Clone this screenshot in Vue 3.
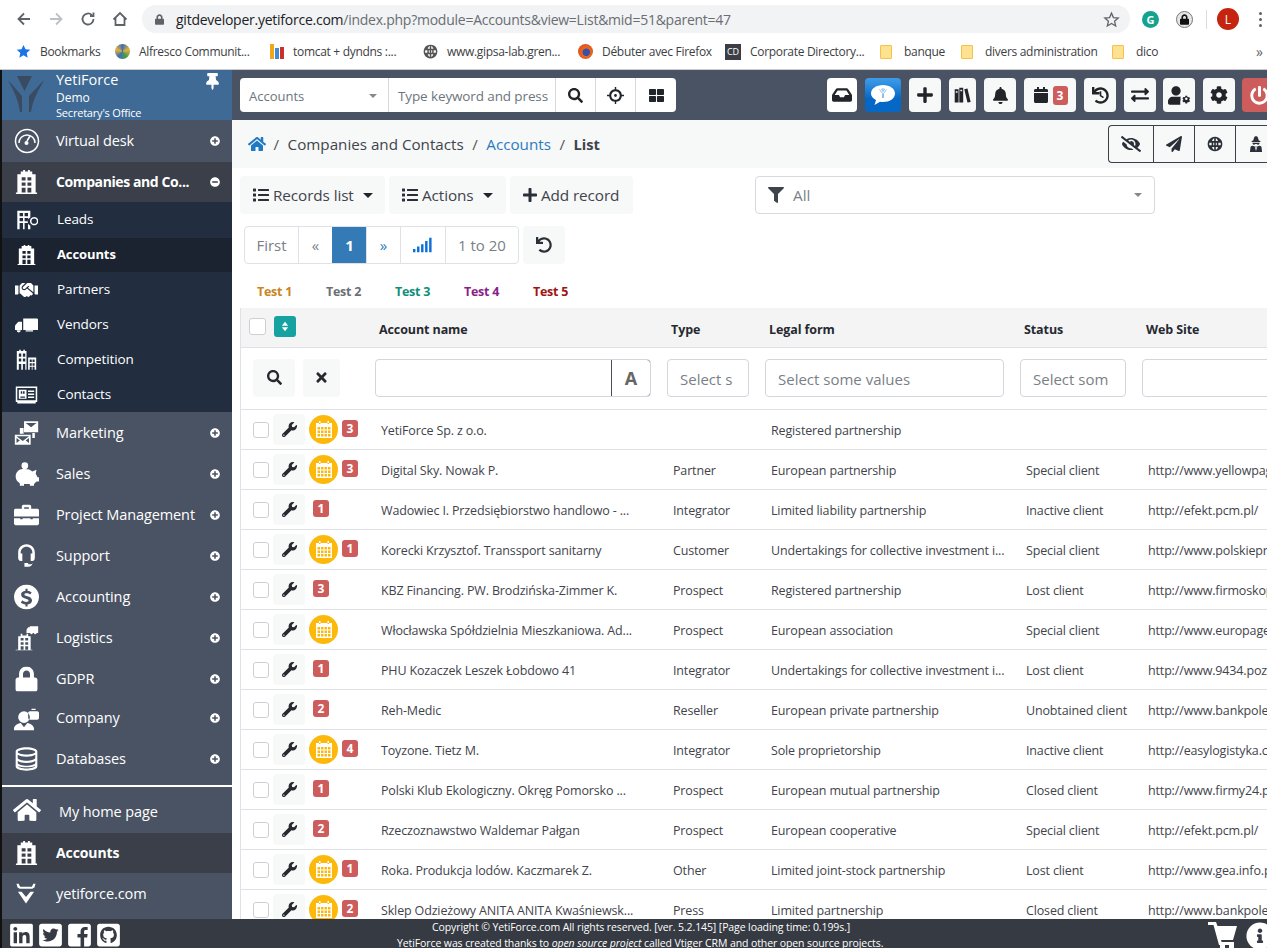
<script setup>
const I = {
  search: ['0 0 512 512','M505 442.7L405.3 343c-4.5-4.5-10.6-7-17-7H372c27.6-35.3 44-79.7 44-128C416 93.1 322.9 0 208 0S0 93.1 0 208s93.1 208 208 208c48.3 0 92.7-16.4 128-44v16.3c0 6.4 2.5 12.5 7 17l99.7 99.7c9.4 9.4 24.6 9.4 33.9 0l28.3-28.3c9.4-9.4 9.4-24.6.1-34zM208 336c-70.7 0-128-57.2-128-128 0-70.7 57.2-128 128-128 70.7 0 128 57.2 128 128 0 70.7-57.2 128-128 128z'],
  plus: ['0 0 448 512','M416 208H272V64c0-17.67-14.33-32-32-32h-32c-17.67 0-32 14.33-32 32v144H32c-17.67 0-32 14.33-32 32v32c0 17.67 14.33 32 32 32h144v144c0 17.67 14.33 32 32 32h32c17.67 0 32-14.33 32-32V304h144c17.67 0 32-14.33 32-32v-32c0-17.67-14.33-32-32-32z'],
  times: ['0 0 352 512','M242.72 256l100.07-100.07c12.28-12.28 12.28-32.19 0-44.48l-22.24-22.24c-12.28-12.28-32.19-12.28-44.48 0L176 189.28 75.93 89.21c-12.28-12.28-32.19-12.28-44.48 0L9.21 111.45c-12.28 12.28-12.28 32.19 0 44.48L109.28 256 9.21 356.07c-12.28 12.28-12.28 32.19 0 44.48l22.24 22.24c12.28 12.28 32.2 12.28 44.48 0L176 322.72l100.07 100.07c12.28 12.28 32.2 12.28 44.48 0l22.24-22.24c12.28-12.28 12.28-32.19 0-44.48L242.72 256z'],
  wrench: ['0 0 512 512','M507.73 109.1c-2.24-9.03-13.54-12.09-20.12-5.51l-74.36 74.36-67.88-11.31-11.31-67.88 74.36-74.36c6.62-6.62 3.43-17.9-5.66-20.16-47.38-11.74-99.55.91-136.58 37.93-39.64 39.64-50.55 97.1-34.05 147.2L18.74 402.76c-24.99 24.99-24.99 65.51 0 90.5 24.99 24.99 65.51 24.99 90.5 0l213.21-213.21c50.12 16.71 107.47 5.68 147.37-34.22 37.07-37.07 49.7-89.32 37.91-136.73zM64 472c-13.25 0-24-10.75-24-24 0-13.26 10.75-24 24-24s24 10.74 24 24c0 13.25-10.75 24-24 24z'],
  bell: ['0 0 448 512','M224 512c35.32 0 63.97-28.65 63.97-64H160.03c0 35.35 28.65 64 63.97 64zm215.39-149.71c-19.32-20.76-55.47-51.99-55.47-154.29 0-77.7-54.48-139.9-127.94-155.16V32c0-17.67-14.32-32-31.98-32s-31.98 14.33-31.98 32v20.84C118.56 68.1 64.08 130.3 64.08 208c0 102.3-36.15 133.53-55.47 154.29-6 6.45-8.66 14.16-8.61 21.71.11 16.4 12.98 32 32.1 32h383.8c19.12 0 32-15.6 32.1-32 .05-7.55-2.61-15.27-8.61-21.71z'],
  home: ['0 0 576 512','M280.37 148.26L96 300.11V464a16 16 0 0 0 16 16l112.06-.29a16 16 0 0 0 15.92-16V368a16 16 0 0 1 16-16h64a16 16 0 0 1 16 16v95.64a16 16 0 0 0 16 16.05L464 480a16 16 0 0 0 16-16V300L295.67 148.26a12.19 12.19 0 0 0-15.3 0zM571.6 251.47L488 182.56V44.05a12 12 0 0 0-12-12h-56a12 12 0 0 0-12 12v72.61L318.47 43a48 48 0 0 0-61 0L4.34 251.47a12 12 0 0 0-1.6 16.9l25.5 31A12 12 0 0 0 45.15 301l235.22-193.74a12.19 12.19 0 0 1 15.3 0L530.9 301a12 12 0 0 0 16.9-1.6l25.5-31a12 12 0 0 0-1.7-16.93z'],
  list: ['0 0 512 512','M80 368H16a16 16 0 0 0-16 16v64a16 16 0 0 0 16 16h64a16 16 0 0 0 16-16v-64a16 16 0 0 0-16-16zm0-320H16A16 16 0 0 0 0 64v64a16 16 0 0 0 16 16h64a16 16 0 0 0 16-16V64a16 16 0 0 0-16-16zm0 160H16a16 16 0 0 0-16 16v64a16 16 0 0 0 16 16h64a16 16 0 0 0 16-16v-64a16 16 0 0 0-16-16zm416 176H176a16 16 0 0 0-16 16v32a16 16 0 0 0 16 16h320a16 16 0 0 0 16-16v-32a16 16 0 0 0-16-16zm0-320H176a16 16 0 0 0-16 16v32a16 16 0 0 0 16 16h320a16 16 0 0 0 16-16V80a16 16 0 0 0-16-16zm0 160H176a16 16 0 0 0-16 16v32a16 16 0 0 0 16 16h320a16 16 0 0 0 16-16v-32a16 16 0 0 0-16-16z'],
  filter: ['0 0 512 512','M487.976 0H24.028C2.71 0-8.047 25.866 7.058 40.971L192 225.941V432c0 7.831 3.821 15.17 10.237 19.662l80 55.98C298.02 518.69 320 507.493 320 487.98V225.941l184.947-184.97C520.021 25.896 509.338 0 487.976 0z'],
  cog: ['0 0 512 512','M487.4 315.7l-42.6-24.6c4.3-23.2 4.3-47 0-70.2l42.6-24.6c4.9-2.8 7.1-8.6 5.5-14-11.1-35.6-30-67.8-54.7-94.6-3.8-4.1-10-5.1-14.8-2.3L380.8 110c-17.9-15.4-38.5-27.3-60.8-35.1V25.8c0-5.6-3.9-10.5-9.4-11.7-36.7-8.2-74.3-7.8-109.2 0-5.5 1.2-9.4 6.1-9.4 11.7V75c-22.2 7.9-42.8 19.8-60.8 35.1L88.7 85.5c-4.9-2.8-11-1.9-14.8 2.3-24.7 26.7-43.6 58.9-54.7 94.6-1.7 5.4.6 11.2 5.5 14L67.3 221c-4.3 23.2-4.3 47 0 70.2l-42.6 24.6c-4.9 2.8-7.1 8.6-5.5 14 11.1 35.6 30 67.8 54.7 94.6 3.8 4.1 10 5.1 14.8 2.3l42.6-24.6c17.9 15.4 38.5 27.3 60.8 35.1v49.2c0 5.6 3.9 10.5 9.4 11.7 36.7 8.2 74.3 7.8 109.2 0 5.5-1.2 9.4-6.1 9.4-11.7v-49.2c22.2-7.9 42.8-19.8 60.8-35.1l42.6 24.6c4.9 2.8 11 1.9 14.8-2.3 24.7-26.7 43.6-58.9 54.7-94.6 1.5-5.5-.7-11.3-5.6-14.1zM256 336c-44.1 0-80-35.9-80-80s35.9-80 80-80 80 35.9 80 80-35.9 80-80 80z'],
  plane: ['0 0 512 512','M476 3.2L12.5 270.6c-18.1 10.4-15.8 35.6 2.2 43.2L121 358.4l287.3-253.2c5.5-4.9 13.3 2.6 8.6 8.3L176 407v80.5c0 23.6 28.5 32.9 42.5 15.8L282 426l124.6 52.2c14.2 6 30.4-2.9 33-18.2l72-432C515 7.8 493.3-6.8 476 3.2z'],
  power: ['0 0 512 512','M400 54.1c63 45 104 118.6 104 201.9 0 136.8-110.8 247.7-247.5 248C120 504.3 8.2 393 8 256.4 7.9 173.1 48.9 99.3 111.8 54.2c11.7-8.3 28-4.8 35 7.7L162.6 90c5.9 10.5 3.1 23.8-6.6 31-41.5 30.8-68 79.6-68 134.9-.1 92.3 74.5 168.1 168 168.1 91.6 0 168.6-74.2 168-169.1-.3-51.8-24.7-101.8-68.1-134-9.7-7.2-12.4-20.5-6.5-30.9l15.8-28.1c7-12.4 23.2-16.1 34.8-7.8zM296 264V24c0-13.3-10.7-24-24-24h-32c-13.3 0-24 10.7-24 24v240c0 13.3 10.7 24 24 24h32c13.3 0 24-10.7 24-24z'],
  undo: ['0 0 512 512','M212.333 224.333H12c-6.627 0-12-5.373-12-12V12C0 5.373 5.373 0 12 0h48c6.627 0 12 5.373 12 12v78.112C117.773 39.279 184.26 7.47 258.175 8.007c136.906.994 246.448 111.623 246.157 248.532C504.041 393.258 393.12 504 256.333 504c-64.089 0-122.496-24.313-166.51-64.215-5.099-4.622-5.334-12.554-.467-17.42l33.967-33.967c4.474-4.474 11.662-4.717 16.401-.525C170.76 415.336 211.58 432 256.333 432c97.268 0 176-78.716 176-176 0-97.267-78.716-176-176-176-58.496 0-110.28 28.476-142.274 72.333h98.274c6.627 0 12 5.373 12 12v48c0 6.627-5.373 12-12 12z'],
  history: ['0 0 512 512','M212.333 224.333H12c-6.627 0-12-5.373-12-12V12C0 5.373 5.373 0 12 0h48c6.627 0 12 5.373 12 12v78.112C117.773 39.279 184.26 7.47 258.175 8.007c136.906.994 246.448 111.623 246.157 248.532C504.041 393.258 393.12 504 256.333 504c-64.089 0-122.496-24.313-166.51-64.215-5.099-4.622-5.334-12.554-.467-17.42l33.967-33.967c4.474-4.474 11.662-4.717 16.401-.525C170.76 415.336 211.58 432 256.333 432c97.268 0 176-78.716 176-176 0-97.267-78.716-176-176-176-58.496 0-110.28 28.476-142.274 72.333h98.274c6.627 0 12 5.373 12 12v48c0 6.627-5.373 12-12 12zM232 130h48v116l80 58-28 38-100-74z'],
  exchange: ['0 0 512 512','M0 168v-16c0-13.255 10.745-24 24-24h360V80c0-21.367 25.899-32.042 40.971-16.971l80 80c9.372 9.373 9.372 24.569 0 33.941l-80 80C409.956 271.982 384 261.456 384 240v-48H24c-13.255 0-24-10.745-24-24zm488 152H128v-48c0-21.314-25.862-32.08-40.971-16.971l-80 80c-9.372 9.373-9.372 24.569 0 33.941l80 80C102.057 463.997 128 453.437 128 432v-48h360c13.255 0 24-10.745 24-24v-16c0-13.255-10.745-24-24-24z'],
  calendar: ['0 0 448 512','M12 192h424c6.6 0 12 5.4 12 12v260c0 26.5-21.5 48-48 48H48c-26.5 0-48-21.5-48-48V204c0-6.6 5.4-12 12-12zm436-44v-36c0-26.5-21.5-48-48-48h-48V12c0-6.6-5.4-12-12-12h-40c-6.6 0-12 5.4-12 12v52H160V12c0-6.6-5.4-12-12-12h-40c-6.6 0-12 5.4-12 12v52H48C21.5 64 0 85.5 0 112v36c0 6.6 5.4 12 12 12h424c6.6 0 12-5.4 12-12z'],
  inbox: ['0 0 576 512','M567.938 243.908L462.25 85.374A48.003 48.003 0 0 0 422.311 64H153.689a48 48 0 0 0-39.938 21.374L8.062 243.908A47.994 47.994 0 0 0 0 270.533V400c0 26.51 21.49 48 48 48h480c26.51 0 48-21.49 48-48V270.533a47.994 47.994 0 0 0-8.062-26.625zM162.252 128h251.497l85.333 128H376l-32 64H232l-32-64H76.918l85.334-128z'],
  th: ['0 0 512 512','M296 32h192c13.255 0 24 10.745 24 24v160c0 13.255-10.745 24-24 24H296c-13.255 0-24-10.745-24-24V56c0-13.255 10.745-24 24-24zm-80 0H24C10.745 32 0 42.745 0 56v160c0 13.255 10.745 24 24 24h192c13.255 0 24-10.745 24-24V56c0-13.255-10.745-24-24-24zM0 296v160c0 13.255 10.745 24 24 24h192c13.255 0 24-10.745 24-24V296c0-13.255-10.745-24-24-24H24c-13.255 0-24 10.745-24 24zm296 184h192c13.255 0 24-10.745 24-24V296c0-13.255-10.745-24-24-24H296c-13.255 0-24 10.745-24 24v160c0 13.255 10.745 24 24 24z'],
  pin: ['0 0 384 512','M298.028 214.267L285.793 96H328c13.255 0 24-10.745 24-24V24c0-13.255-10.745-24-24-24H56C42.745 0 32 10.745 32 24v48c0 13.255 10.745 24 24 24h42.207L85.972 214.267C37.465 236.82 0 277.261 0 328c0 13.255 10.745 24 24 24h136v104.007c0 1.242.289 2.467.845 3.578l24 48c2.941 5.882 11.364 5.893 14.311 0l24-48a8.008 8.008 0 0 0 .845-3.578V352h136c13.255 0 24-10.745 24-24-.001-51.183-37.983-91.42-85.973-113.733z'],
  pluscircle: ['0 0 512 512','M256 8C119 8 8 119 8 256s111 248 248 248 248-111 248-248S393 8 256 8zm144 276c0 6.6-5.4 12-12 12h-92v92c0 6.6-5.4 12-12 12h-56c-6.6 0-12-5.4-12-12v-92h-92c-6.6 0-12-5.4-12-12v-56c0-6.6 5.4-12 12-12h92v-92c0-6.6 5.4-12 12-12h56c6.6 0 12 5.4 12 12v92h92c6.6 0 12 5.4 12 12v56z'],
  minuscircle: ['0 0 512 512','M256 8C119 8 8 119 8 256s111 248 248 248 248-111 248-248S393 8 256 8zM124 296c-6.6 0-12-5.4-12-12v-56c0-6.6 5.4-12 12-12h264c6.6 0 12 5.4 12 12v56c0 6.6-5.4 12-12 12H124z'],
  lock: ['0 0 448 512','M400 224h-24v-72C376 68.2 307.8 0 224 0S72 68.2 72 152v72H48c-26.5 0-48 21.5-48 48v192c0 26.5 21.5 48 48 48h352c26.5 0 48-21.5 48-48V272c0-26.5-21.5-48-48-48zm-104 0H152v-72c0-39.7 32.3-72 72-72s72 32.3 72 72v72z'],
  database: ['0 0 28 30','M14 1c7 0 13 2 13 5v18c0 3-6 5-13 5S1 27 1 24V6c0-3 6-5 13-5zm0 2.500C8 3.500 3.500 5 3.500 6.500S8 9.500 14 9.500s10.500-1.500 10.500-3S20 3.500 14 3.500zM3.500 10v4c1 1.500 5 3 10.500 3s9.500-1.500 10.500-3v-4c-2 1.500-6 2.200-10.500 2.200S5.500 11.500 3.500 10zm0 7.500v2.500c1 1.500 5 3 10.500 3s9.500-1.500 10.500-3v-2.500c-2 1.500-6 2.200-10.500 2.200s-8.500-.7-10.500-2.200zm0 6c.5 1.500 5 3 10.500 3s10-1.500 10.500-3c-2 1-6 1.500-10.500 1.500S5.500 24.500 3.500 23.500z'],
  info: ['0 0 512 512','M256 8C119.043 8 8 119.083 8 256c0 136.997 111.043 248 248 248s248-111.003 248-248C504 119.083 392.957 8 256 8zm0 110c23.196 0 42 18.804 42 42s-18.804 42-42 42-42-18.804-42-42 18.804-42 42-42zm56 254c0 6.627-5.373 12-12 12h-88c-6.627 0-12-5.373-12-12v-24c0-6.627 5.373-12 12-12h12v-64h-12c-6.627 0-12-5.373-12-12v-24c0-6.627 5.373-12 12-12h64c6.627 0 12 5.373 12 12v100h12c6.627 0 12 5.373 12 12v24z'],
  linkedin: ['0 0 448 512','M416 32H31.9C14.3 32 0 46.5 0 64.3v383.4C0 465.5 14.3 480 31.9 480H416c17.6 0 32-14.5 32-32.3V64.3c0-17.8-14.4-32.3-32-32.3zM135.4 416H69V202.2h66.5V416zm-33.2-243c-21.3 0-38.5-17.3-38.5-38.5S80.9 96 102.2 96c21.2 0 38.5 17.3 38.5 38.5 0 21.3-17.2 38.5-38.5 38.5zm282.1 243h-66.4V312c0-24.8-.5-56.7-34.5-56.7-34.6 0-39.9 27-39.9 54.9V416h-66.4V202.2h63.7v29.2h.9c8.9-16.8 30.6-34.5 62.9-34.5 67.2 0 79.7 44.3 79.7 101.9V416z'],
  twitter: ['0 0 448 512','M400 32H48C21.5 32 0 53.5 0 80v352c0 26.5 21.5 48 48 48h352c26.5 0 48-21.5 48-48V80c0-26.5-21.5-48-48-48zm-48.9 158.8c.2 2.8.2 5.7.2 8.5 0 86.7-66 186.6-186.6 186.6-37.2 0-71.7-10.8-100.7-29.4 5.3.6 10.4.8 15.8.8 30.7 0 58.9-10.4 81.4-28-28.8-.6-53-19.5-61.3-45.5 10.1 1.5 19.2 1.5 29.6-1.2-30-6.1-52.5-32.5-52.5-64.4v-.8c8.7 4.9 18.9 7.9 29.6 8.3a65.447 65.447 0 0 1-29.2-54.6c0-12.2 3.2-23.4 8.9-33.1 32.3 39.8 80.8 65.8 135.2 68.6-9.3-44.5 24-80.6 64-80.6 18.9 0 35.9 7.9 47.9 20.7 14.8-2.8 29-8.3 41.6-15.8-4.9 15.2-15.1 28-28.6 36 13.1-1.4 25.8-5 37.6-10.1-8.9 13.1-20.1 24.7-32.9 34z'],
  facebook: ['0 0 448 512','M448 80v352c0 26.5-21.5 48-48 48h-85.3V302.8h60.6l8.7-67.6h-69.3V192c0-19.6 5.4-32.9 33.5-32.9H384V98.7c-6.2-.8-27.4-2.7-52.2-2.7-51.6 0-87 31.5-87 89.4v49.9H184v67.6h60.9V480H48c-26.5 0-48-21.5-48-48V80c0-26.5 21.5-48 48-48h352c26.5 0 48 21.5 48 48z'],
  github: ['0 0 448 512','M400 32H48C21.5 32 0 53.5 0 80v352c0 26.5 21.5 48 48 48h352c26.5 0 48-21.5 48-48V80c0-26.5-21.5-48-48-48zM277.3 415.7c-8.4 1.5-11.5-3.7-11.5-8 0-5.4.2-33 .2-55.3 0-15.6-5.2-25.5-11.3-30.7 37-4.1 76-9.2 76-73.1 0-18.2-6.5-27.3-17.1-39 1.7-4.3 7.4-22-1.7-45-13.9-4.3-45.7 17.9-45.7 17.9-13.2-3.7-27.5-5.6-41.6-5.6-14.1 0-28.4 1.9-41.6 5.6 0 0-31.8-22.2-45.7-17.9-9.1 22.9-3.5 40.6-1.7 45-10.6 11.7-15.6 20.8-15.6 39 0 63.6 37.3 69 74.3 73.1-4.8 4.3-9.1 11.7-10.6 22.3-9.5 4.3-33.8 11.7-48.3-13.9-9.1-15.8-25.5-17.1-25.5-17.1-16.2-.2-1.1 10.2-1.1 10.2 10.8 5 18.4 24.2 18.4 24.2 9.7 29.7 56.1 19.7 56.1 19.7 0 13.9.2 36.5.2 40.6 0 4.3-3 9.5-11.5 8-66-22.1-112.2-84.9-112.2-158.3 0-91.8 70.2-161.5 162-161.5S388 165.6 388 257.4c.1 73.4-44.7 136.3-110.7 158.3z'],
  star: ['0 0 24 24','M12 1.5l3.2 7 7.6.8-5.7 5.1 1.6 7.5L12 18.1l-6.7 3.8 1.6-7.5L1.2 9.3l7.6-.8z'],
  eyeslash: ['0 0 640 512','M320 400c-75.85 0-137.25-58.71-142.9-133.11L72.2 185.82c-13.79 17.3-26.48 35.59-36.72 55.59a32.35 32.35 0 0 0 0 29.19C89.71 376.41 197.07 448 320 448c26.91 0 52.87-4 77.89-10.46L346 397.39a144.13 144.13 0 0 1-26 2.61zm313.82 58.1l-110.55-85.44a331.25 331.25 0 0 0 81.25-102.07 32.35 32.35 0 0 0 0-29.19C550.29 135.59 442.93 64 320 64a308.15 308.15 0 0 0-147.32 37.7L45.46 3.37A16 16 0 0 0 23 6.18L3.37 31.45A16 16 0 0 0 6.18 53.9l588.36 454.73a16 16 0 0 0 22.46-2.81l19.64-25.27a16 16 0 0 0-2.82-22.45zm-183.72-142l-39.3-30.38A94.75 94.75 0 0 0 416 256a94.76 94.76 0 0 0-121.31-92.21A47.65 47.65 0 0 1 304 192a46.64 46.64 0 0 1-1.54 10l-73.61-56.89A142.31 142.31 0 0 1 320 112a143.92 143.92 0 0 1 144 144c0 21.63-5.29 41.79-13.9 60.11z'],
  usercog: ['0 0 640 512','M224 256c70.7 0 128-57.3 128-128S294.7 0 224 0 96 57.3 96 128s57.3 128 128 128zM134 288h224c-14 30-14 64 0 94-6 4-11 8-16 13v117H48c-26 0-48-21-48-48v-42c0-76 60-134 134-134zM610 398l-19-11c2-10 2-21 0-31l19-11c2-1 3-4 2-6-5-16-13-30-24-42-2-2-4-2-6-1l-19 11c-8-7-17-12-27-16v-22c0-2-2-5-4-5-16-4-33-4-48 0-3 0-4 3-4 5v22c-10 4-19 9-27 16l-19-11c-2-1-5-1-7 1-11 12-19 26-24 42-1 2 0 5 2 6l19 11c-2 10-2 21 0 31l-19 11c-2 1-3 4-2 6 5 16 13 30 24 42 2 2 5 2 7 1l19-11c8 7 17 12 27 16v22c0 2 1 5 4 5 16 4 32 4 48 0 2 0 4-3 4-5v-22c10-4 19-9 27-16l19 11c2 1 4 1 6-1 11-12 19-26 24-42 1-2 0-5-2-6zm-101-16a35 35 0 1 1 0-70 35 35 0 0 1 0 70z'],
  building: ['0 0 24 26','M2.500 24V5H6V2h2.500V.5h2V2h3V.5h2V2H18v3h3.500v19H23v1.500H1V24zM7 8v3.500h4V8zm6 0v3.500h4V8zM7 13.500V17h4v-3.500zm6 0V17h4v-3.500zM7 19v5h4v-5zm6 0v5h4v-5z'],
  leads: ['0 0 30 26','M3 25V1h17v8.500a6 6 0 0 0 0 11V25zM6 4v4h4.500V4zm6.500 0v4H17V4zM6 10.500v4h4.500v-4zm6.500 0v4H17v-4zM6 17v8h4.500v-8zm6.500 0v8H17v-8zM25 9a5.500 5.500 0 1 0 .01 0zM25 11a3.500 3.500 0 1 1-.01 7 3.500 3.500 0 0 1 .01-7z'],
  comp: ['0 0 28 26','M2 25V2h3V0h2v2h3V0h2v2h2v23zM4.500 5v4h3V5zm5 0v4h3V5zM4.500 11v4h3v-4zm5 0v4h3v-4zM4.500 18v7h3v-7zm5 0v7h3v-7zM16 25V10h10v15zM18 12.500v3h2.500v-3zm3.500 0v3H24v-3zM18 17v3h2.500v-3zm3.500 0v3H24v-3zM18 21.500V25h2.500v-3.500zm3.500 0V25H24v-3.500z'],
  shake: ['0 0 640 512','M434.700 64h-85.900c-8 0-15.700 3-21.600 8.400l-98.300 90c-.1.100-.2.300-.3.400-16.600 15.600-16.300 40.500-2.100 56 12.700 13.900 39.400 17.600 56.100 2.700.1-.1.300-.1.400-.2l79.900-73.200c6.500-5.900 16.700-5.500 22.600 1 6 6.500 5.500 16.600-1 22.600l-26.100 23.900L504 313.800c2.900 2.400 5.500 5 7.900 7.700V128l-54.600-54.600c-5.900-6-14.100-9.400-22.600-9.400zM544 128.200v223.900c0 17.700 14.300 32 32 32h64V128.200h-96zM0 384h64c17.700 0 32-14.300 32-32V128.200H0V384zm483.900-45.300L334.600 217.500l-30 27.500c-29.700 27.100-75.200 24.500-101.700-4.400-26.900-29.400-24.800-74.900 4.400-101.700L289.100 64h-83.800c-8.500 0-16.600 3.400-22.600 9.400L128 128v223.900h18.300l90.500 81.900c27.400 22.300 67.700 18.100 90-9.300l.2-.2 17.900 15.500c15.900 13 39.400 10.500 52.300-5.400l31.400-38.600 5.400 4.400c13.700 11.100 33.900 9.100 45-4.700l9.500-11.700c11.200-13.800 9.100-33.900-4.600-45.100z'],
  truck: ['0 0 28 20','M10 2h16.500a1.500 1.500 0 0 1 1.500 1.500V16H10zM8.500 6v10H0v-4.500c0-1 .500-1.500 1-2L4 6zM2 16.500a2.500 2.500 0 0 0 5 0zM13 16.500h9v1.500h-9z'],
  contacts: ['0 0 30 24','M1 1h28v20h-2v2H3v-2H1zM3 3v16h24V3zM5 5h10v12H5zM7.500 7v3.500h2V7zm3 0v3.500h2V7zM7 14v1.500h6V14zM17 6h8v2h-8zm0 4h8v2h-8zm0 4h8v2h-8z'],
  mail: ['0 0 30 30','M12 1h17v13H12zM14 3l6.500 5L27 3zM7 9h4.500v7H7zM22 15h3v6h-3zM1 17h19v12H1zM3 19l7.500 5.500L18 19zM3 21v6l4-3zm15 0v6l-4-3z'],
  piggy: ['0 0 30 28','M13 0a4 4 0 1 1 0 8 4 4 0 0 1 0-8zM5 10c2-2 5-2 8-2 4 0 7 1 9 3l5-2-1 5c1 1 2 3 2 4h2v5h-3c-1 1-2 2-3 3v2h-5v-2h-7v2H7v-3c-3-2-5-4-5-8 0-3 1-5 3-7z'],
  brief: ['0 0 32 26','M10 5V2c0-1 1-2 2-2h8c1 0 2 1 2 2v3h8c1 0 2 1 2 2v8H0V7c0-1 1-2 2-2zm3 0h6V3h-6zM0 17h8v1.500h3V17h10v1.500h3V17h8v7c0 1-1 2-2 2H2c-1 0-2-1-2-2z'],
  headset: ['0 0 24 30','M12 1C5.800 1 2 5.500 2 11v6c0 2 1 4 3 4h2V12H5v-1c0-4 3-7 7-7s7 3 7 7v1h-2v9h2v2c0 1-1 2-2 2h-3v-1.500H9.500V28H14c3 0 5-2 5-4v-3c2 0 3-2 3-4v-6c0-5.500-3.800-10-10-10z'],
  dollar: ['0 0 24 24','M12 0a12 12 0 1 0 .01 0zm-1 4v2c-2.500.3-4.200 1.600-4.200 3.700 0 2.400 1.700 3.300 4.500 4 2 .5 2.700.9 2.700 1.700 0 .7-.8 1.300-2.200 1.300-1.500 0-2.700-.6-3.700-1.500l-1.600 2c1.100 1 2.700 1.800 4.500 2v2h2v-2c2.600-.3 4.300-1.600 4.300-3.800 0-2.400-1.800-3.400-4.600-4.100-2-.5-2.700-.8-2.700-1.600 0-.7.700-1.200 2-1.200 1.500 0 2.500.4 3.500 1.200l1.500-2c-1-.9-2.500-1.500-4-1.700V4z'],
  logistics: ['0 0 30 30','M5 29V13h3v-3h2v2h5v-2h2v3h3v16h2v1H2v-1zM8 15v3h3.500v-3zm5.500 0v3H17v-3zM8 20v3h3.500v-3zm5.500 0v3H17v-3zM8 25v4h3.500v-4zm5.500 0v4H17v-4zM19 1h10v8h-2a1.500 1.500 0 0 1-3 0h-1.500a1.500 1.500 0 0 1-3 0H15V5l2-3h2z'],
  company: ['0 0 30 30','M12 7a7 7 0 1 1 0 14 7 7 0 0 1 0-14zM0 30v-2c0-4 4-6 8-7l4 5 4-5c4 1 8 3 8 7v2zM19 7h9c1 0 2 1 2 2v6c0 1-1 2-2 2h-9c-1 0-2-1-2-2V9c0-1 1-2 2-2zm2-1.500V4h5v1.500z'],
  yeti: ['0 0 28 30','M1 1h3l2 4h16l2-4h3l-1.500 5-3 2H5.500l-3-2zM3 12h5l6 7 6-7h5L14 28z'],
  cart: ['0 0 30 28','M0 0h8l1.500 4H29l-4 14H13l.7 2H26v3H11L5.500 3H0zM12 23h5v3.500a2.500 2.500 0 0 1-5 0zM21 23h5v3.500a2.500 2.500 0 0 1-5 0z'],
  crosshair: ['0 0 24 24','M11 0h2v3.100A9 9 0 0 1 20.900 11H24v2h-3.100A9 9 0 0 1 13 20.900V24h-2v-3.100A9 9 0 0 1 3.100 13H0v-2h3.100A9 9 0 0 1 11 3.100zM12 6a6 6 0 1 0 .01 0zm0 4a2 2 0 1 1-.01 4 2 2 0 0 1 .01-4z'],
  books: ['0 0 24 24','M1 3h5.500v19H1zM7.500 1H13v21H7.500zM14.500 3l4.500-1 4.500 19-4.500 1zM2.500 6v2h2.500V6zm6.500-2v2h2.500V4z'],
  spy: ['0 0 448 512','M224 10c30 0 50 15 60 40l30 90 50 20v30H84v-30l50-20 30-90c10-25 30-40 60-40zM110 215h228c0 25-8 45-20 60-30 10-60 5-70-20h-48c-10 25-40 30-70 20-12-15-20-35-20-60zM50 340c20-15 45-25 75-25 30 20 70 30 99 30s69-10 99-30c30 0 55 10 75 25l20 170H30zM190 360l34 120 34-120z'],
  globe: ['0 0 24 24','M12 1a11 11 0 1 0 .01 0zM10.800 3.200V7.500H7.500c.7-2.300 1.900-3.900 3.300-4.300zm2.400 0c1.400.4 2.600 2 3.300 4.300h-3.300zM3.600 10h3.400c-.1.700-.1 1.300-.1 2s0 1.300.1 2H3.600a8.600 8.600 0 0 1 0-4zm5.800 0h1.400v4H9.400c-.1-.7-.1-1.300-.1-2s0-1.300.1-2zm3.800 0h1.400c.1.700.1 1.300.1 2s0 1.300-.1 2h-1.400zm3.800 0h3.400a8.600 8.600 0 0 1 0 4H17c.1-.7.1-1.300.1-2s0-1.300-.1-2zM7.500 16.500h3.300v4.300c-1.400-.4-2.600-2-3.300-4.300zm5.700 0h3.300c-.7 2.300-1.900 3.900-3.300 4.300z'],
  signal: ['0 0 26 18','M0 14h3v4H0zM5 11h3v7H5zM10 8h3v10h-3zM15 4h3v14h-3zM20 0h3v18h-3z'],
  gridcal: ['0 0 20 20','M2 3h16v15H2zM3.500 7v2.500h2.500V7zm3.500 0v2.500h2.500V7zm3.500 0v2.500H13V7zm3.500 0v2.500h2.500V7zM3.500 10.500V13h2.500v-2.500zm3.500 0V13h2.500v-2.500zm3.500 0V13H13v-2.500zm3.500 0V13h2.500v-2.500zM3.500 14v2.500h2.500V14zm3.500 0v2.500h2.500V14zm3.500 0v2.500H13V14zm3.500 0v2.500h2.500V14zM5 1h1.500v3H5zm8.500 0H15v3h-1.500z']
}

const bookmarks = [
  { t: 'Bookmarks', w: 99, c: 'bstar' },
  { t: 'Alfresco Communit...', w: 154, c: 'balf' },
  { t: 'tomcat + dyndns :...', w: 154, c: 'bbar' },
  { t: 'www.gipsa-lab.gren...', w: 155, c: 'bglobe' },
  { t: 'Débuter avec Firefox', w: 147, c: 'bfox' },
  { t: 'Corporate Directory...', w: 155, c: 'bcd' },
  { t: 'banque', w: 81, c: 'bfold' },
  { t: 'divers administration', w: 151, c: 'bfold' },
  { t: 'dico', w: 100, c: 'bfold' }
]

const subItems = [
  { t: 'Leads', i: 'leads', c: 'tall' },
  { t: 'Accounts', i: 'building', c: 'on' },
  { t: 'Partners', i: 'shake' },
  { t: 'Vendors', i: 'truck' },
  { t: 'Competition', i: 'comp' },
  { t: 'Contacts', i: 'contacts' }
]
const mainItems = [
  { t: 'Marketing', i: 'mail' },
  { t: 'Sales', i: 'piggy' },
  { t: 'Project Management', i: 'brief' },
  { t: 'Support', i: 'headset' },
  { t: 'Accounting', i: 'dollar' },
  { t: 'Logistics', i: 'logistics' },
  { t: 'GDPR', i: 'lock' },
  { t: 'Company', i: 'company', c: 'pull' },
  { t: 'Databases', i: 'database' }
]
const topBtns = [
  { i: 'inbox', w: 30, s: 20 },
  { chat: true, w: 36 },
  { i: 'plus', w: 32, s: 18 },
  { i: 'books', w: 27, s: 17 },
  { i: 'bell', w: 32, s: 17 },
  { i: 'calendar', w: 52, s: 16, badge: 3 },
  { i: 'history', w: 32, s: 17 },
  { i: 'exchange', w: 32, s: 18 },
  { i: 'usercog', w: 32, s: 23, c: 'nudge' },
  { i: 'cog', w: 32, s: 18 }
]
const tabs = [
  { t: 'Test 1', c: '#c9851e' },
  { t: 'Test 2', c: '#6b6f75' },
  { t: 'Test 3', c: '#0f8f78' },
  { t: 'Test 4', c: '#8a1f8a' },
  { t: 'Test 5', c: '#a01313' }
]
const rows = [
  { cal: 1, b: 3, n: 'YetiForce Sp. z o.o.', ty: '', l: 'Registered partnership', s: '', w: '' },
  { cal: 1, b: 3, n: 'Digital Sky. Nowak P.', ty: 'Partner', l: 'European partnership', s: 'Special client', w: 'http://www.yellowpages.pl' },
  { cal: 0, b: 1, n: 'Wadowiec I. Przedsiębiorstwo handlowo - ...', ty: 'Integrator', l: 'Limited liability partnership', s: 'Inactive client', w: 'http://efekt.pcm.pl/' },
  { cal: 1, b: 1, n: 'Korecki Krzysztof. Transsport sanitarny', ty: 'Customer', l: 'Undertakings for collective investment i...', s: 'Special client', w: 'http://www.polskieprzedsiebiorstwa.pl' },
  { cal: 0, b: 3, n: 'KBZ Financing. PW. Brodzińska-Zimmer K.', ty: 'Prospect', l: 'Registered partnership', s: 'Lost client', w: 'http://www.firmoskop.pl' },
  { cal: 1, b: 0, n: 'Włocławska Spółdzielnia Mieszkaniowa. Ad...', ty: 'Prospect', l: 'European association', s: 'Special client', w: 'http://www.europages.pl' },
  { cal: 0, b: 1, n: 'PHU Kozaczek Leszek Łobdowo 41', ty: 'Integrator', l: 'Undertakings for collective investment i...', s: 'Lost client', w: 'http://www.9434.pozycjonowanie' },
  { cal: 0, b: 2, n: 'Reh-Medic', ty: 'Reseller', l: 'European private partnership', s: 'Unobtained client', w: 'http://www.bankpolek.pl' },
  { cal: 1, b: 4, n: 'Toyzone. Tietz M.', ty: 'Integrator', l: 'Sole proprietorship', s: 'Inactive client', w: 'http://easylogistyka.com.pl' },
  { cal: 0, b: 1, n: 'Polski Klub Ekologiczny. Okręg Pomorsko ...', ty: 'Prospect', l: 'European mutual partnership', s: 'Closed client', w: 'http://www.firmy24.pl' },
  { cal: 0, b: 2, n: 'Rzeczoznawstwo Waldemar Pałgan', ty: 'Prospect', l: 'European cooperative', s: 'Special client', w: 'http://efekt.pcm.pl/' },
  { cal: 1, b: 1, n: 'Roka. Produkcja lodów. Kaczmarek Z.', ty: 'Other', l: 'Limited joint-stock partnership', s: 'Lost client', w: 'http://www.gea.info.pl' },
  { cal: 1, b: 2, n: 'Sklep Odzieżowy ANITA ANITA Kwaśniewsk...', ty: 'Press', l: 'Limited partnership', s: 'Closed client', w: 'http://www.bankpolek.pl' }
]
</script>

<template>
  <div class="page">
    <header class="chrome">
      <div class="toolbar">
        <svg class="nav" viewBox="0 0 16 16"><path d="M14 8H3M8 2.500L2.500 8 8 13.500" /></svg>
        <svg class="nav off" viewBox="0 0 16 16"><path d="M2 8h11M8 2.500L13.500 8 8 13.500" /></svg>
        <svg class="nav" viewBox="0 0 16 16"><path d="M13.500 8a5.500 5.500 0 1 1-1.600-3.900M13.500 1.500V5H10" /></svg>
        <svg class="nav" viewBox="0 0 16 16"><path d="M1.500 8.500L8 2l6.500 6.500M3.500 7v7h9V7" /></svg>
        <div class="url">
          <svg class="urllock" :viewBox="I.lock[0]"><path :d="I.lock[1]" /></svg>
          <span class="urltext"><b>gitdeveloper.yetiforce.com</b>/index.php?module=Accounts&amp;view=List&amp;mid=51&amp;parent=47</span>
          <svg class="urlstar" viewBox="0 0 24 24"><path d="M12 3l2.700 6.300 6.800.6-5.200 4.500 1.600 6.700L12 17.500l-5.900 3.600 1.600-6.700L2.500 9.900l6.800-.6z" /></svg>
        </div>
        <div class="exts">
          <span class="grammarly">G</span>
          <span class="extlock"><svg :viewBox="I.lock[0]"><path :d="I.lock[1]" /></svg></span>
          <span class="sep"></span>
          <span class="avatar">L</span>
          <span class="dots"><i></i><i></i><i></i></span>
        </div>
      </div>
      <div class="bookbar">
        <div v-for="b in bookmarks" :key="b.t" class="bm" :style="{ width: b.w + 'px' }">
          <span class="fav" :class="b.c">
            <svg v-if="b.c === 'bstar'" :viewBox="I.star[0]"><path :d="I.star[1]" /></svg>
            <svg v-else-if="b.c === 'bglobe'" :viewBox="I.globe[0]"><path :d="I.globe[1]" /></svg>
            <template v-else-if="b.c === 'bbar'"><i></i><i></i><i></i></template>
            <template v-else-if="b.c === 'bcd'">CD</template>
          </span>
          <span>{{ b.t }}</span>
        </div>
        <span class="more">»</span>
      </div>
    </header>

    <div class="app">
      <aside class="side">
        <div class="brand">
          <svg class="logo" viewBox="0 0 36 36">
            <path d="M9 0h15l-7.500 15zM0 4l14 16v16h-2C10 22 5 14 0 4zM36 4L21 20v16h2C25 22 31 14 36 4z" />
          </svg>
          <div class="brandtext">
            <div class="b1">YetiForce</div>
            <div class="b2">Demo</div>
            <div class="b3">Secretary's Office</div>
          </div>
          <svg class="pin" :viewBox="I.pin[0]"><path :d="I.pin[1]" /></svg>
        </div>

        <div class="mi vd">
          <svg class="gauge" viewBox="0 0 26 26"><circle cx="13" cy="13" r="11.500" /><path d="M5 15a8 8 0 0 1 16 0M16 8l-3 5" /><circle class="dot" cx="12.500" cy="15" r="2" /></svg>
          <span>Virtual desk</span>
          <svg class="toggle" :viewBox="I.pluscircle[0]"><path :d="I.pluscircle[1]" /></svg>
        </div>
        <div class="mi open">
          <span class="micon"><svg :viewBox="I.building[0]"><path :d="I.building[1]" /></svg></span>
          <span class="mtext">Companies and Co...</span>
          <svg class="toggle" :viewBox="I.minuscircle[0]"><path :d="I.minuscircle[1]" /></svg>
        </div>
        <div class="subs">
          <div v-for="s in subItems" :key="s.t" class="si" :class="s.c">
            <span class="sicon"><svg :viewBox="I[s.i][0]"><path :d="I[s.i][1]" /></svg></span>
            <span>{{ s.t }}</span>
          </div>
        </div>
        <div v-for="m in mainItems" :key="m.t" class="mi" :class="m.c">
          <span class="micon"><svg :viewBox="I[m.i][0]"><path :d="I[m.i][1]" /></svg></span>
          <span>{{ m.t }}</span>
          <svg class="toggle" :viewBox="I.pluscircle[0]"><path :d="I.pluscircle[1]" /></svg>
        </div>
        <div class="divider"></div>
        <div class="mi homei">
          <span class="micon"><svg :viewBox="I.home[0]"><path :d="I.home[1]" /></svg></span>
          <span>My home page</span>
        </div>
        <div class="mi open strong">
          <span class="micon"><svg :viewBox="I.building[0]"><path :d="I.building[1]" /></svg></span>
          <span>Accounts</span>
        </div>
        <div class="mi">
          <span class="micon yeti"><svg :viewBox="I.yeti[0]"><path :d="I.yeti[1]" /></svg></span>
          <span>yetiforce.com</span>
        </div>
      </aside>

      <main class="main">
        <div class="topbar">
          <div class="searchgrp">
            <div class="sel"><span>Accounts</span><i class="caret"></i></div>
            <div class="kw">Type keyword and press</div>
            <div class="sbtn"><svg :viewBox="I.search[0]"><path :d="I.search[1]" /></svg></div>
            <div class="sbtn"><svg class="cross" :viewBox="I.crosshair[0]"><path :d="I.crosshair[1]" /></svg></div>
            <div class="sbtn"><svg :viewBox="I.th[0]"><path :d="I.th[1]" /></svg></div>
          </div>
          <div class="tbtns">
            <div v-for="(b, k) in topBtns" :key="k" class="tb" :class="[b.c, { chat: b.chat, first: k === 0 }]" :style="{ width: b.w + 'px' }">
              <svg v-if="b.chat" viewBox="0 0 24 20"><path d="M12 0c6.500 0 12 3.500 12 8.500S18.500 17 12 17c-1 0-2 0-3-.300L3.500 20l1.500-5C2 13.500 0 11.300 0 8.500 0 3.500 5.500 0 12 0z" /><path class="chaty" d="M8.500 4.500l3 4v4.500M15.500 4.500l-3 4v4.500M10.500 4h3l-1.500 2.500z" /></svg>
              <svg v-else :viewBox="I[b.i][0]" :style="{ width: b.s + 'px', height: b.s + 'px' }"><path :d="I[b.i][1]" /></svg>
              <span v-if="b.badge" class="tbadge">{{ b.badge }}</span>
            </div>
            <div class="tb powerb"><svg :viewBox="I.power[0]"><path :d="I.power[1]" /></svg></div>
          </div>
        </div>

        <div class="crumbs">
          <svg class="chome" :viewBox="I.home[0]"><path :d="I.home[1]" /></svg>
          <span class="cs">/</span>
          <span class="c1">Companies and Contacts</span>
          <span class="cs">/</span>
          <span class="c2">Accounts</span>
          <span class="cs">/</span>
          <b class="c3">List</b>
          <div class="cgroup">
            <div><svg :viewBox="I.eyeslash[0]"><path :d="I.eyeslash[1]" /></svg></div>
            <div><svg :viewBox="I.plane[0]"><path :d="I.plane[1]" /></svg></div>
            <div><svg :viewBox="I.globe[0]"><path :d="I.globe[1]" /></svg></div>
            <div><svg :viewBox="I.spy[0]"><path :d="I.spy[1]" /></svg></div>
          </div>
        </div>

        <div class="actions">
          <div class="btn w145"><svg :viewBox="I.list[0]"><path :d="I.list[1]" /></svg>Records list<i class="caret dark"></i></div>
          <div class="btn w117"><svg :viewBox="I.list[0]"><path :d="I.list[1]" /></svg>Actions<i class="caret dark"></i></div>
          <div class="btn w123"><svg :viewBox="I.plus[0]"><path :d="I.plus[1]" /></svg>Add record</div>
          <div class="allsel">
            <svg :viewBox="I.filter[0]"><path :d="I.filter[1]" /></svg>
            <span>All</span>
            <i class="caret"></i>
          </div>
        </div>

        <div class="pagerow">
          <div class="pager">
            <span class="p w54 grey">First</span>
            <span class="p w34 grey">«</span>
            <span class="p w34 cur">1</span>
            <span class="p w34 blue">»</span>
            <span class="p w45"><svg :viewBox="I.signal[0]"><path :d="I.signal[1]" /></svg></span>
            <span class="p w74 grey">1 to 20</span>
          </div>
          <div class="undo"><svg :viewBox="I.undo[0]"><path :d="I.undo[1]" /></svg></div>
        </div>

        <div class="tabs">
          <span v-for="t in tabs" :key="t.t" :style="{ color: t.c }">{{ t.t }}</span>
        </div>

        <div class="table">
          <div class="row head">
            <div class="c0"><span class="check"></span><span class="sortb"><svg viewBox="0 0 10 14"><path d="M5 1l4 5H1zM5 13L1 8h8z" /></svg></span></div>
            <div>Account name</div><div>Type</div><div>Legal form</div><div>Status</div><div>Web Site</div>
          </div>
          <div class="row filt">
            <div class="c0"><span class="fbtn w42"><svg :viewBox="I.search[0]"><path :d="I.search[1]" /></svg></span><span class="fbtn w37"><svg :viewBox="I.times[0]"><path :d="I.times[1]" /></svg></span></div>
            <div><div class="finput fname"><span class="abox">A</span></div></div>
            <div><div class="finput ftype">Select s</div></div>
            <div><div class="finput flegal">Select some values</div></div>
            <div><div class="finput fstatus">Select som</div></div>
            <div><div class="finput fweb"></div></div>
          </div>
          <div v-for="r in rows" :key="r.n" class="row data">
            <div class="c0">
              <span class="check"></span>
              <span class="wr"><svg :viewBox="I.wrench[0]"><path :d="I.wrench[1]" /></svg></span>
              <span v-if="r.cal" class="cal"><svg :viewBox="I.gridcal[0]"><path :d="I.gridcal[1]" /></svg></span>
              <span v-if="r.b" class="rb" :class="{ solo: !r.cal }">{{ r.b }}</span>
            </div>
            <div>{{ r.n }}</div><div>{{ r.ty }}</div><div>{{ r.l }}</div><div>{{ r.s }}</div><div>{{ r.w }}</div>
          </div>
        </div>
      </main>
    </div>

    <footer class="foot">
      <div class="social">
        <svg :viewBox="I.linkedin[0]"><path :d="I.linkedin[1]" /></svg>
        <svg :viewBox="I.twitter[0]"><path :d="I.twitter[1]" /></svg>
        <svg :viewBox="I.facebook[0]"><path :d="I.facebook[1]" /></svg>
        <svg :viewBox="I.github[0]"><path :d="I.github[1]" /></svg>
      </div>
      <div class="ftext">
        <div>Copyright © YetiForce.com All rights reserved. [ver. 5.2.145] [Page loading time: 0.199s.]</div>
        <div>YetiForce was created thanks to <em>open source project</em> called Vtiger CRM and other open source projects.</div>
      </div>
      <div class="fright">
        <svg :viewBox="I.cart[0]"><path :d="I.cart[1]" /></svg>
        <svg :viewBox="I.info[0]"><path :d="I.info[1]" /></svg>
      </div>
    </footer>
  </div>
</template>

<style>
html, body { margin: 0; overflow: hidden; background: #fff; }
</style>

<style scoped>
.page { width: 1267px; height: 948px; overflow: hidden; display: flex; flex-direction: column; font-family: "Open Sans", "Noto Sans", sans-serif; font-size: 12px; color: #3a3f48; background: #111; }
svg { fill: currentColor; fill-rule: evenodd; display: block; flex: none; }
.chrome { height: 70px; flex: none; background: #fff; border-bottom: 1px solid #ccc; box-sizing: border-box; }
.toolbar { height: 38px; display: flex; align-items: center; padding-left: 16px; box-sizing: border-box; }
.nav { width: 16px; height: 16px; margin-right: 16px; fill: none; stroke: #5f6368; stroke-width: 1.800; }
.nav.off { stroke: #bdc1c6; }
.url { margin-left: -2px; width: 988px; height: 28px; background: #f1f3f4; border-radius: 14px; display: flex; align-items: center; box-sizing: border-box; padding: 0 10px 0 13px; font-size: 14px; color: #6a6d72; }
.urllock { width: 9px; height: 11px; color: #5f6368; margin-right: 12px; }
.urltext { flex: 1; letter-spacing: -.25px; white-space: nowrap; }
.urltext b { font-weight: 400; color: #202124; }
.urlstar { width: 17px; height: 17px; fill: none; stroke: #5f6368; stroke-width: 1.800; }
.exts { display: flex; align-items: center; margin-left: 12px; }
.grammarly { width: 17px; height: 17px; border-radius: 50%; background: #15a38f; color: #fff; font-size: 11px; font-weight: 700; display: flex; align-items: center; justify-content: center; }
.extlock { width: 17px; height: 17px; margin-left: 17px; border-radius: 50%; background: #e6e6ea; border: 1px solid #777; box-sizing: border-box; display: flex; align-items: center; justify-content: center; color: #111; }
.extlock svg { width: 9px; height: 11px; }
.sep { width: 1px; height: 19px; background: #dadce0; margin-left: 13px; }
.avatar { width: 22px; height: 22px; border-radius: 50%; background: #c5250f; color: #fff; font-size: 12px; display: flex; align-items: center; justify-content: center; margin-left: 10px; }
.dots { display: flex; flex-direction: column; gap: 3px; margin-left: 20px; }
.dots i { width: 3px; height: 3px; background: #5f6368; border-radius: 50%; }
.bookbar { height: 27px; display: flex; align-items: center; padding-left: 16px; font-size: 12px; color: #3c4043; letter-spacing: -.3px; white-space: nowrap; }
.bm { display: flex; align-items: center; gap: 9px; flex: none; }
.fav { width: 15px; height: 15px; display: flex; flex: none; align-items: center; justify-content: center; letter-spacing: 0; }
.bstar { color: #1a73e8; }
.balf { border-radius: 50%; background: conic-gradient(#3d6fb4, #e6b23a, #4a9a49, #3d6fb4, #e6b23a, #3d6fb4); }
.bbar { gap: 1px; align-items: flex-end; }
.bbar i { width: 4px; height: 15px; background: #f0a71e; }
.bbar i:nth-child(2) { background: #3d8fd1; height: 11px; }
.bbar i:nth-child(3) { background: #c9302c; height: 12px; }
.bglobe { color: #555; }
.bfox { border-radius: 50%; background: radial-gradient(circle at 55% 55%, #3b4fa8 30%, #e66a1d 35%, #d6401f 100%); }
.bcd { background: #3b3f45; color: #fff; font-size: 9px; width: 16px; height: 16px; }
.bfold { width: 12px; height: 14px; background: #fde293; border: 1px solid #f5c244; box-sizing: border-box; border-radius: 1px; margin-right: 3px; }
.more { color: #5f6368; margin-left: 44px; font-size: 14px; }

.app { flex: 1; min-height: 0; display: flex; padding-left: 2px; overflow: hidden; }
.side { width: 230px; flex: none; background: #4a5364; color: #fff; font-size: 15px; display: flex; flex-direction: column; overflow: hidden; }
.brand { height: 50px; flex: none; background: #3f6a95; display: flex; position: relative; }
.logo { width: 36px; height: 36px; margin: 6px 0 0 6px; color: #3a4a60; }
.brandtext { margin-left: 12px; padding-top: 1px; }
.b1 { font-size: 14.500px; line-height: 18px; }
.b2 { font-size: 12px; line-height: 17px; }
.b3 { font-size: 11px; line-height: 14px; letter-spacing: -.2px; }
.pin { position: absolute; left: 204px; top: 3px; width: 13px; height: 17px; }
.mi { height: 41px; flex: none; display: flex; align-items: center; box-sizing: border-box; padding-left: 54px; position: relative; font-size: 14.500px; letter-spacing: -.1px; white-space: nowrap; }
.mi.vd { height: 42px; padding-bottom: 2px; }
.mi.pull { margin-top: -2px; }
.mi.open { height: 40px; padding-bottom: 2px; background: #3a3f4a; font-weight: 700; }
.mi.strong { font-size: 14px; }
.mtext { letter-spacing: -.4px; font-size: 14px; }
.gauge { position: absolute; left: 12px; top: 8px; width: 26px; height: 26px; fill: none; stroke: #fff; stroke-width: 1.500; }
.gauge .dot { fill: #fff; stroke: none; }
.micon { position: absolute; left: 11px; top: 50%; transform: translateY(-50%); width: 26px; display: flex; justify-content: center; }
.micon svg { width: 25px; height: 25px; }
.micon.yeti svg { width: 22px; height: 22px; }
.toggle { position: absolute; left: 208px; top: 50%; margin-top: -5px; width: 10px; height: 10px; }
.subs { flex: none; background: #222e40; height: 210px; font-size: 13.500px; }
.si { height: 35px; display: flex; align-items: center; padding: 0 0 2px 55px; position: relative; box-sizing: border-box; letter-spacing: -.1px; }
.si.tall { height: 36px; padding-bottom: 3px; }
.si.on { height: 34px; padding-bottom: 3px; background: #1b2330; font-weight: 700; font-size: 13px; }
.sicon { position: absolute; left: 12px; top: 50%; transform: translateY(-50%); width: 25px; display: flex; justify-content: center; }
.sicon svg { width: 23px; height: 21px; }
.divider { height: 2px; flex: none; background: #fff; margin-top: 6px; }
.homei { height: 46px; padding-left: 57px; padding-top: 2px; }
.homei .micon { left: 12px; }
.homei .micon svg { width: 28px; height: 25px; }

.main { width: 1035px; flex: none; background: #fff; overflow: hidden; display: flex; flex-direction: column; }
.topbar { height: 50px; flex: none; background: #4a5364; display: flex; align-items: center; padding-left: 8px; box-sizing: border-box; }
.searchgrp { height: 34px; width: 436px; flex: none; background: #fff; border-radius: 4px; display: flex; align-items: stretch; font-size: 13.500px; color: #6c757d; }
.sel { width: 149px; display: flex; align-items: center; justify-content: space-between; padding: 2px 11px 0 9px; box-sizing: border-box; border-right: 1px solid #d8d8d8; font-size: 13px; }
.caret { width: 0; height: 0; border-left: 4px solid transparent; border-right: 4px solid transparent; border-top: 4px solid #888; display: block; }
.caret.dark { border-top-color: #212529; border-left-width: 5px; border-right-width: 5px; border-top-width: 5px; margin-left: 5px; }
.kw { width: 167px; display: flex; align-items: center; padding: 2px 0 0 9px; box-sizing: border-box; border-right: 1px solid #d8d8d8; white-space: nowrap; letter-spacing: -.12px; }
.sbtn { width: 40px; display: flex; align-items: center; justify-content: center; border-right: 1px solid #d8d8d8; box-sizing: border-box; color: #212529; }
.sbtn:last-child { border-right: 0; }
.sbtn svg { width: 15px; height: 15px; }
.sbtn svg.cross { width: 17px; height: 17px; }
.tbtns { display: flex; gap: 8px; margin-left: 151px; }
.tb { height: 34px; flex: none; background: #f7f8f8; border-radius: 4px; display: flex; align-items: center; justify-content: center; gap: 3px; color: #212529; }
.tb.first { background: #fff; }
.tb.nudge { margin-left: -1px; }
.tb.chat { background: linear-gradient(#3f9be8 0, #2f8fe0 18%, #0668c6 60%); color: #fff; }
.chat svg { width: 24px; height: 20px; }
.chaty { fill: none; stroke: #8fbfe8; stroke-width: 1; }
.tbadge { background: #cd5c5c; color: #fff; font-size: 12px; font-weight: 700; width: 15px; height: 19px; border-radius: 3px; display: flex; align-items: center; justify-content: center; margin-left: 1px; }
.powerb { width: 32px; margin-left: -1px; background: #cd5c5c; color: #fff; justify-content: flex-start; padding-left: 8px; box-sizing: border-box; border-radius: 4px 0 0 4px; }
.powerb svg { width: 19px; height: 19px; }

.crumbs { height: 48px; flex: none; background: #f7f8f8; display: flex; align-items: center; padding-left: 16px; font-size: 15.200px; color: #3f444c; position: relative; white-space: nowrap; box-sizing: border-box; }
.chome { width: 18px; height: 16px; color: #1f7ac4; margin-right: -1px; }
.cs { margin: 0 8.500px; color: #555; }
.c2 { color: #2c7bc1; }
.c3 { color: #3f444c; font-size: 14.700px; }
.cgroup { position: absolute; left: 876px; top: 5px; height: 38px; display: flex; border: 1px solid #3a3f48; border-right: 0; border-radius: 4px 0 0 4px; box-sizing: border-box; color: #2a2f38; }
.cgroup div { width: 41px; box-sizing: border-box; display: flex; align-items: center; justify-content: center; border-left: 1px solid #3a3f48; }
.cgroup div:first-child { width: 44px; border-left: 0; }
.cgroup svg { width: 16px; height: 16px; }
.cgroup div:first-child svg { width: 20px; height: 16px; }

.actions { height: 38px; flex: none; margin-top: 8px; padding-left: 8px; display: flex; gap: 4px; font-size: 15.300px; color: #3f444c; }
.btn { background: #f7f8f8; border-radius: 4px; display: flex; align-items: center; padding-left: 13px; box-sizing: border-box; gap: 4px; white-space: nowrap; letter-spacing: -.1px; }
.btn svg { width: 16px; height: 16px; color: #2a2f38; }
.w145 { width: 145px; } .w117 { width: 117px; } .w123 { width: 123px; padding-left: 12px; gap: 3px; }
.allsel { width: 400px; margin-left: 118px; border: 1px solid #d6d9de; border-radius: 4px; display: flex; align-items: center; padding: 0 12px; box-sizing: border-box; color: #7a7f87; }
.allsel svg { width: 16px; height: 16px; color: #3f444c; margin-right: 9px; }
.allsel span { flex: 1; }
.pagerow { height: 38px; flex: none; margin-top: 12px; padding-left: 12px; display: flex; gap: 4px; }
.pager { display: flex; border: 1px solid #dee2e6; border-radius: 4px; overflow: hidden; font-size: 15px; box-sizing: border-box; }
.p { display: flex; align-items: center; justify-content: center; border-left: 1px solid #dee2e6; box-sizing: border-box; }
.p:first-child { border-left: 0; }
.grey { color: #7a7f87; } .blue { color: #2c7bc1; }
.cur { background: #337ab7; color: #fff; font-weight: 700; border-color: #337ab7; }
.w54 { width: 53px; } .w34 { width: 34px; } .w45 { width: 45px; } .w74 { width: 73px; }
.w45 svg { width: 21px; height: 16px; color: #0a6fd6; }
.undo { width: 42px; background: #f7f8f8; border-radius: 4px; display: flex; align-items: center; justify-content: center; color: #2a2f38; }
.undo svg { width: 16px; height: 16px; }
.tabs { flex: none; height: 44px; padding: 10px 0 0 25px; box-sizing: border-box; display: flex; align-items: center; font-size: 12.500px; font-weight: 700; letter-spacing: -.25px; }
.tabs span { width: 69px; }

.table { margin-left: 8px; border-left: 1px solid #dee2e6; width: 1027px; flex: none; overflow: hidden; }
.row { display: grid; grid-template-columns: 136px 292px 98px 255px 122px 200px; align-items: center; box-sizing: border-box; white-space: nowrap; }
.row > div { min-width: 0; }
.c0 { display: flex; align-items: center; }
.head { height: 40px; background: #f4f4f4; border-bottom: 1px solid #dee2e6; font-weight: 700; font-size: 12.500px; color: #262a30; letter-spacing: -.1px; }
.head > div { padding: 4px 0 0 2px; }
.head .c0 { padding: 0 0 0 8px; margin-top: -2px; }
.head .check { width: 17px; height: 17px; }
.check { width: 16px; height: 16px; border: 1px solid #ccd0d5; border-radius: 3px; background: #fff; box-sizing: border-box; flex: none; }
.sortb { width: 22px; height: 21px; background: #17a2a2; border-radius: 3px; margin-left: 8px; display: flex; align-items: center; justify-content: center; color: #fff; }
.sortb svg { width: 8px; height: 11px; }
.filt { height: 62px; padding-bottom: 2px; border-bottom: 1px solid #dee2e6; font-size: 15px; color: #7a7f87; }
.filt .c0 { padding-left: 12px; gap: 8px; }
.fbtn { height: 38px; background: #f7f8f8; border-radius: 4px; display: flex; align-items: center; justify-content: center; color: #262a30; }
.fbtn.w42 { width: 42px; } .fbtn.w37 { width: 37px; }
.fbtn svg { width: 15px; height: 15px; }
.finput { height: 38px; border: 1px solid #d3d6dc; border-radius: 4px; display: flex; align-items: center; padding: 2px 0 0 12px; box-sizing: border-box; margin-left: -2px; margin-right: 18px; white-space: nowrap; overflow: hidden; }
.fname { width: 276px; justify-content: flex-end; padding: 0; }
.fstatus { margin-right: 18px; }
.fweb { margin-right: -60px; }
.abox { width: 40px; height: 38px; border: 1px solid #4a4d55; border-radius: 0 4px 4px 0; box-sizing: border-box; display: flex; align-items: center; justify-content: center; font-weight: 700; font-size: 18px; color: #666; margin-right: -1px; }
.data { height: 40px; border-bottom: 1px solid #dee2e6; font-size: 12.500px; color: #3f444c; letter-spacing: -.15px; }
.data > div { padding: 2px 0 0 4px; overflow: hidden; }
.data .c0 { padding: 0 0 0 12px; overflow: visible; }
.wr { width: 32px; height: 31px; background: #f7f8f8; border-radius: 4px; display: flex; align-items: center; justify-content: center; margin-left: 4px; color: #262a30; }
.wr svg { width: 15px; height: 15px; }
.cal { width: 29px; height: 29px; border-radius: 50%; background: #fdb90b; margin-left: 4px; display: flex; align-items: center; justify-content: center; color: #fff; }
.cal svg { width: 20px; height: 20px; }
.rb { width: 16px; height: 17px; background: #cd5c5c; color: #fff; font-size: 12px; font-weight: 700; border-radius: 3px; display: flex; align-items: center; justify-content: center; margin-left: 4px; margin-top: -3px; letter-spacing: 0; }
.rb.solo { margin-left: 8px; }

.foot { height: 29px; flex: none; margin-left: 2px; background: #363a42; color: #fff; display: flex; position: relative; overflow: hidden; }
.social { display: flex; gap: 6px; padding: 3px 0 0 8px; }
.social svg { width: 23px; height: 26px; }
.ftext { position: absolute; left: 395px; top: 0; font-size: 10.500px; line-height: 16px; white-space: nowrap; letter-spacing: -.1px; }
.ftext div:first-child { padding-left: 35px; }
.fright { position: absolute; left: 1206px; top: 3px; display: flex; gap: 7px; }
.fright svg { width: 30px; height: 28px; }
</style>
